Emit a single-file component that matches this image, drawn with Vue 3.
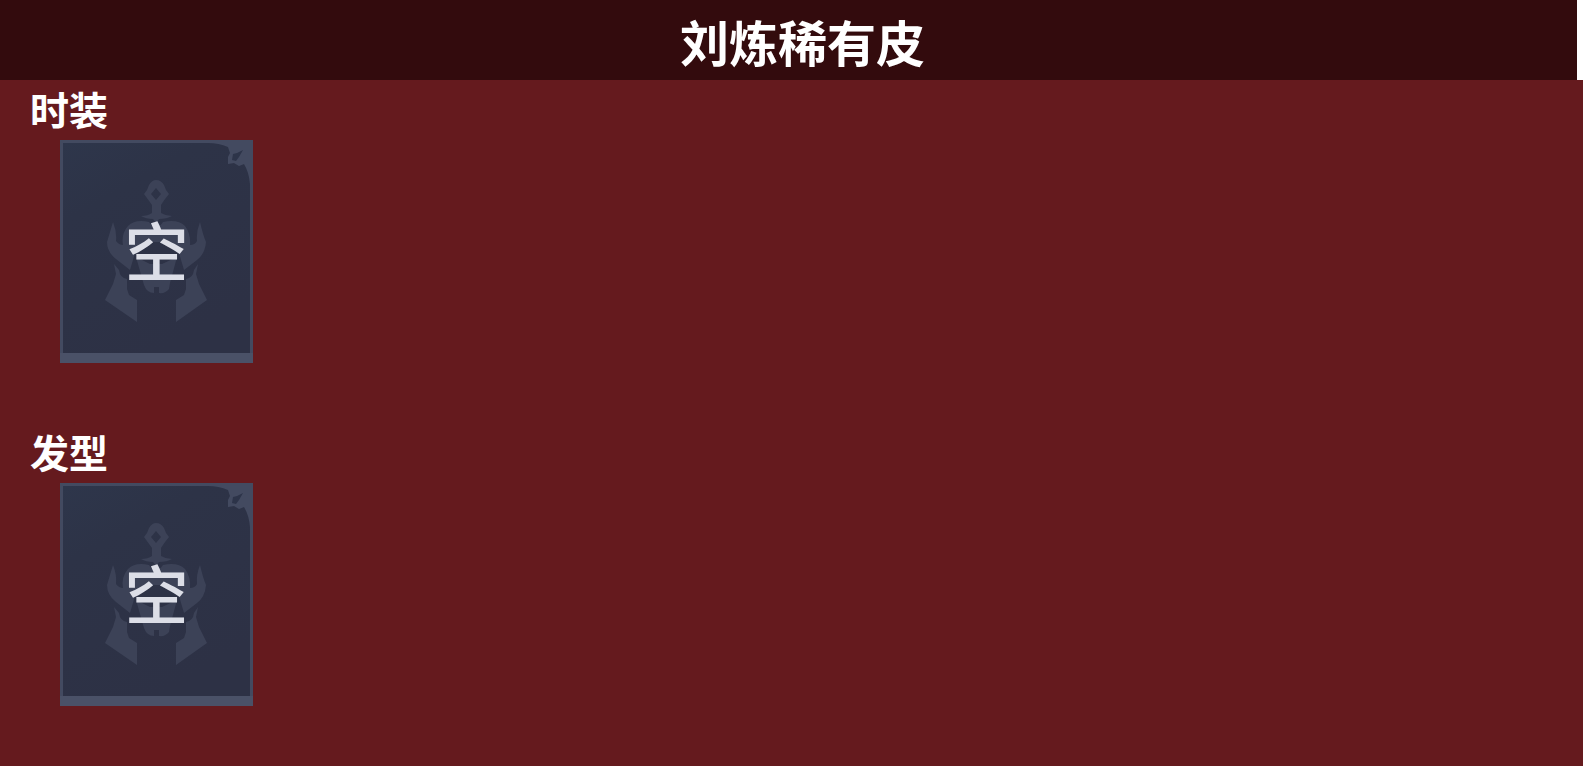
<script setup>
const sections = [
  { id: 'outfit', title: '时装', status: '空' },
  { id: 'hair', title: '发型', status: '空' },
]
</script>

<template>
  <main class="page">
    <header class="header">
      <h1 class="title">刘炼稀有皮</h1>
    </header>
    <section v-for="section in sections" :key="section.id" class="section">
      <h2 class="heading">{{ section.title }}</h2>
      <div class="card">
        <svg class="art" viewBox="0 0 193 223" aria-hidden="true">
          <defs>
            <linearGradient :id="`fill-${section.id}`" x1="0" y1="0" x2="0.5" y2="1">
              <stop offset="0" stop-color="#2e364b" />
              <stop offset="0.3" stop-color="#2d3347" />
              <stop offset="1" stop-color="#2d3145" />
            </linearGradient>
          </defs>
          <rect width="193" height="223" fill="#434a60" />
          <path d="M3 3H148Q159 3 168 7L170 13L168 17L168 24L174 23L179 26L184 24Q189 32 190 44V213H3Z" :fill="`url(#fill-${section.id})`" />
          <path d="M173 14L177 13L183 10L179 17L176 21L172 20Z" fill="#2d3449" />
          <rect y="213" width="193" height="10" fill="#4a5167" />
          <g fill="#3c4257">
            <path fill-rule="evenodd" d="M96 40Q101 40 104 45L106 50L109 54Q104 60 101 65L101 73Q106 76 112 76Q107 79 99 79L96 83L93 79Q86 79 81 76Q88 76 92 73L92 65L84 54L87 50L89 45Q92 40 96 40ZM96 48L91 54L96 60L101 54Z" />
            <path d="M53 82Q57 92 56 101Q59 105 63 105Q61 94 68 86Q75 79 89 82L96 91L103 82Q118 79 125 86Q131 94 130 105Q135 105 137 101Q136 92 140 82Q143 95 146 102Q145 114 137 120L124 130L119 113L104 102L90 102L75 113L70 130L56 119Q47 112 47 102Z" />
            <path d="M54 124L59 130Q60 138 67 139L67 149L69 155L77 160V182L45 160L53 144L56 134Z" />
            <path d="M138 124L134 130Q133 138 126 139L126 149L124 155L116 160V182L147 160L139 144L136 134Z" />
            <path d="M76 117L90 124H102L117 117L110 143L109 149Q105 154 99 153V147H94V153Q87 153 84 145Z" />
          </g>
        </svg>
        <span class="status">{{ section.status }}</span>
      </div>
    </section>
  </main>
</template>

<style>
body {
  margin: 0;
  background: #651a1e;
}
</style>

<style scoped>
.page {
  min-height: 100vh;
  background: #651a1e;
  color: #fff;
  font-family: "Noto Sans CJK SC", sans-serif;
}
.header {
  display: flex;
  align-items: center;
  justify-content: center;
  height: 80px;
  box-sizing: border-box;
  padding: 2px 0 0 28px;
  background: #330b0d;
  border-right: 6px solid #fff;
}
.title {
  margin: 0;
  font-size: 49px;
  line-height: 72px;
  font-weight: 700;
}
.section {
  height: 343px;
  padding-left: 30px;
}
.heading {
  margin: 0;
  padding-bottom: 4px;
  font-size: 39px;
  line-height: 56px;
  font-weight: 700;
}
.card {
  position: relative;
  width: 193px;
  height: 223px;
  margin-left: 30px;
}
.art {
  display: block;
  width: 100%;
  height: 100%;
}
.status {
  position: absolute;
  inset: 0;
  display: flex;
  align-items: center;
  justify-content: center;
  padding-bottom: 8px;
  font-size: 64px;
  line-height: 64px;
  font-weight: 500;
  color: #dcdee7;
}
</style>
